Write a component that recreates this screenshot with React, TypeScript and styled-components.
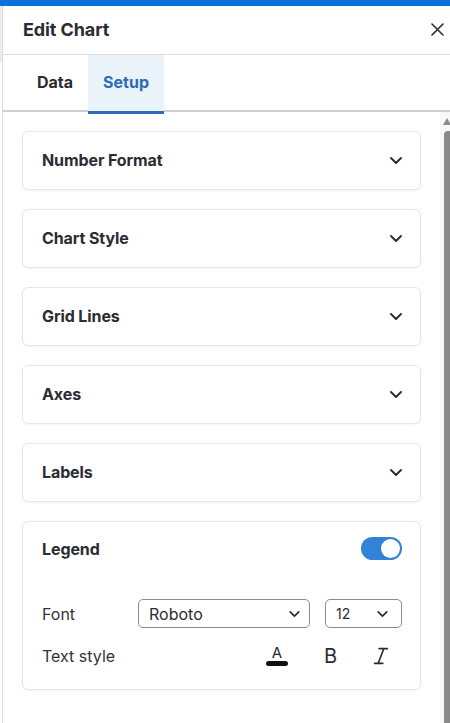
import React, { useState } from "react";
import styled, { createGlobalStyle } from "styled-components";
import { Italic } from "lucide-react";

const GlobalStyle = createGlobalStyle`
  html, body {
    margin: 0;
    padding: 0;
    overflow: hidden;
    background: #ffffff;
  }
  body {
    font-family: Inter, "Noto Sans", "Liberation Sans", sans-serif;
    color: #2b2b33;
  }
  * { box-sizing: border-box; }
`;

const Page = styled.div`
  width: 450px;
  height: 723px;
  display: flex;
  flex-direction: column;
`;

const TopBar = styled.div`
  height: 6px;
  flex: none;
  background: #0a72de;
`;

const Shell = styled.div`
  flex: 1;
  min-height: 0;
  padding-left: 2px;
  background: linear-gradient(to bottom, #ececec 0 57px, #ffffff 57px);
  display: flex;
`;

const Frame = styled.div`
  flex: 1;
  min-width: 0;
  background: #ffffff;
  border-left: 1px solid #dcdcdc;
  display: flex;
  flex-direction: column;
`;

const Header = styled.div`
  height: 49px;
  flex: none;
  display: flex;
  align-items: center;
  justify-content: space-between;
  padding: 0 0 1px 20px;
  border-bottom: 1px solid #dddddd;
`;

const Title = styled.h1`
  margin: 0;
  font-size: 18px;
  font-weight: 700;
  color: #2b2b33;
  letter-spacing: -0.1px;
`;

const CloseButton = styled.button`
  border: none;
  background: none;
  padding: 0;
  margin-right: 1px;
  width: 24px;
  height: 24px;
  display: flex;
  align-items: center;
  justify-content: center;
  color: #2b2b33;
  cursor: pointer;
`;

const TabBar = styled.div`
  height: 57px;
  flex: none;
  display: flex;
  padding-left: 19px;
  border-bottom: 2px solid #cfcfcf;
`;

const Tab = styled.button<{ $active?: boolean }>`
  border: none;
  margin: 0 0 -2px 0;
  padding: 0 15px 2px;
  height: 59px;
  font-family: inherit;
  font-size: 16px;
  font-weight: 700;
  color: ${(p) => (p.$active ? "#2d6db4" : "#2b2b33")};
  background: ${(p) => (p.$active ? "#eaf2fa" : "transparent")};
  border-bottom: 3px solid ${(p) => (p.$active ? "#2d6db4" : "transparent")};
  cursor: pointer;
`;

const ScrollArea = styled.div`
  flex: 1;
  min-height: 0;
  display: flex;
`;

const Body = styled.div`
  flex: 1;
  min-width: 0;
  overflow: hidden;
  padding: 19px 19px 40px 19px;
  display: flex;
  flex-direction: column;
  gap: 19px;
`;

const Rail = styled.div`
  width: 10px;
  flex: none;
  background: #f8f8f8;
  padding: 6px 0 0 4px;
  display: flex;
  flex-direction: column;
  gap: 3px;
`;

const RailArrow = styled.div`
  width: 0;
  height: 0;
  margin-left: -1px;
  border-left: 4px solid transparent;
  border-right: 4px solid transparent;
  border-bottom: 7px solid #8a8a8a;
`;

const RailThumb = styled.div`
  flex: 1;
  background: #8a8a8a;
  border-radius: 4px 0 0 0;
  margin-top: 3px;
`;

const Card = styled.section`
  flex: none;
  background: #ffffff;
  border: 1px solid #e6e6e6;
  border-radius: 6px;
  box-shadow: 0 1px 3px rgba(0, 0, 0, 0.05);
`;

const SectionHeader = styled.button`
  width: 100%;
  height: 57px;
  border: none;
  background: none;
  display: flex;
  align-items: center;
  justify-content: space-between;
  padding: 0 18px 1px 19px;
  font-family: inherit;
  cursor: pointer;
`;

const SectionTitle = styled.span`
  font-size: 16px;
  font-weight: 700;
  color: #2b2b33;
  letter-spacing: -0.1px;
`;

const LegendBody = styled.div`
  padding: 15px 18px 19px 19px;
  display: flex;
  flex-direction: column;
`;

const LegendHead = styled.div`
  display: flex;
  align-items: center;
  justify-content: space-between;
  height: 23px;
  margin-bottom: 39px;
`;

const Toggle = styled.button<{ $on: boolean }>`
  width: 41px;
  height: 23px;
  border-radius: 12px;
  border: none;
  padding: 2px;
  display: flex;
  justify-content: ${(p) => (p.$on ? "flex-end" : "flex-start")};
  background: ${(p) => (p.$on ? "#3282d5" : "#c4c4c4")};
  cursor: pointer;
`;

const Knob = styled.span`
  width: 19px;
  height: 19px;
  border-radius: 50%;
  background: #ffffff;
`;

const FieldRow = styled.div`
  display: grid;
  grid-template-columns: 81px 172px 1fr;
  align-items: center;
  column-gap: 15px;
  height: 29px;
`;

const FieldLabel = styled.span`
  font-size: 16px;
  color: #33333b;
`;

const SelectBox = styled.button<{ $small?: boolean }>`
  height: 29px;
  border: 1px solid #8c8c8c;
  border-radius: 5px;
  background: #ffffff;
  display: flex;
  align-items: center;
  justify-content: space-between;
  padding: 0 ${(p) => (p.$small ? "13px" : "9px")} 0 10px;
  font-family: inherit;
  font-size: ${(p) => (p.$small ? "14px" : "16px")};
  color: #2b2b33;
  cursor: pointer;
`;

const StyleRow = styled.div`
  display: flex;
  align-items: center;
  justify-content: space-between;
  height: 29px;
  margin-top: 13px;
`;

const StyleButtons = styled.div`
  display: flex;
  align-items: center;
  gap: 16px;
  padding-right: 3px;
`;

const StyleButton = styled.button`
  width: 36px;
  height: 29px;
  border: none;
  background: none;
  padding: 0;
  display: flex;
  flex-direction: column;
  align-items: center;
  justify-content: center;
  font-family: inherit;
  color: #2b2b33;
  cursor: pointer;
`;

const ColorLetter = styled.span`
  font-size: 15px;
  line-height: 13px;
  font-weight: 400;
  color: #2b2b33;
`;

const ColorBar = styled.span`
  margin-top: 2px;
  width: 22px;
  height: 5px;
  border-radius: 3px;
  background: #111111;
`;

const BoldLetter = styled.span`
  font-size: 20px;
  font-weight: 400;
  line-height: 20px;
  margin-left: 3px;
  color: #2b2b33;
`;

const Chevron = ({ size = 12 }: { size?: number }) => (
  <svg width={size} height={Math.round((size * 7) / 12)} viewBox="0 0 12 7" fill="none">
    <path d="M1 1l5 5 5-5" stroke="#2b2b33" strokeWidth="1.9" strokeLinecap="round" strokeLinejoin="round" />
  </svg>
);

const CloseIcon = () => (
  <svg width="13" height="13" viewBox="0 0 13 13" fill="none">
    <path d="M1 1l11 11M12 1L1 12" stroke="#2b2b33" strokeWidth="1.6" strokeLinecap="round" />
  </svg>
);

const sections = ["Number Format", "Chart Style", "Grid Lines", "Axes", "Labels"];

export default function App() {
  const [legendOn, setLegendOn] = useState(true);
  return (
    <>
      <GlobalStyle />
      <Page>
        <TopBar />
        <Shell>
          <Frame>
            <Header>
              <Title>Edit Chart</Title>
              <CloseButton aria-label="Close">
                <CloseIcon />
              </CloseButton>
            </Header>
            <TabBar>
              <Tab>Data</Tab>
              <Tab $active>Setup</Tab>
            </TabBar>
            <ScrollArea>
              <Body>
                {sections.map((s) => (
                  <Card key={s}>
                    <SectionHeader>
                      <SectionTitle>{s}</SectionTitle>
                      <Chevron />
                    </SectionHeader>
                  </Card>
                ))}
                <Card>
                  <LegendBody>
                    <LegendHead>
                      <SectionTitle>Legend</SectionTitle>
                      <Toggle $on={legendOn} onClick={() => setLegendOn(!legendOn)} aria-label="Toggle legend">
                        <Knob />
                      </Toggle>
                    </LegendHead>
                    <FieldRow>
                      <FieldLabel>Font</FieldLabel>
                      <SelectBox>
                        <span>Roboto</span>
                        <Chevron size={11} />
                      </SelectBox>
                      <SelectBox $small>
                        <span>12</span>
                        <Chevron size={11} />
                      </SelectBox>
                    </FieldRow>
                    <StyleRow>
                      <FieldLabel>Text style</FieldLabel>
                      <StyleButtons>
                        <StyleButton aria-label="Text color">
                          <ColorLetter>A</ColorLetter>
                          <ColorBar />
                        </StyleButton>
                        <StyleButton aria-label="Bold">
                          <BoldLetter>B</BoldLetter>
                        </StyleButton>
                        <StyleButton aria-label="Italic">
                          <Italic size={22} strokeWidth={1.8} color="#2b2b33" />
                        </StyleButton>
                      </StyleButtons>
                    </StyleRow>
                  </LegendBody>
                </Card>
              </Body>
              <Rail aria-hidden>
                <RailArrow />
                <RailThumb />
              </Rail>
            </ScrollArea>
          </Frame>
        </Shell>
      </Page>
    </>
  );
}
